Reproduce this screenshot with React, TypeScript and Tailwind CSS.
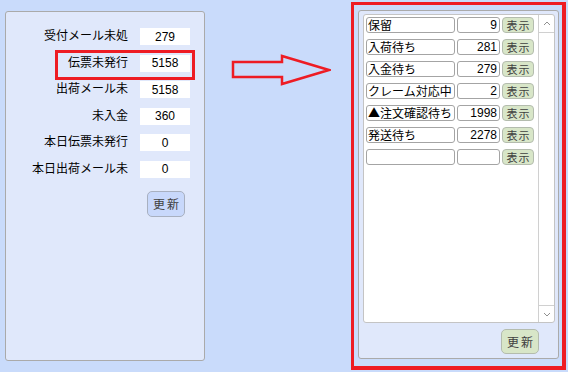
import React from "react";

const jp = { fontFamily: '"Noto Sans CJK JP", "Noto Sans", sans-serif' };
const num = { fontFamily: '"Liberation Sans", Arial, sans-serif' };

const summary = [
  { label: "受付メール未処", value: "279" },
  { label: "伝票未発行", value: "5158", marked: true },
  { label: "出荷メール未", value: "5158" },
  { label: "未入金", value: "360" },
  { label: "本日伝票未発行", value: "0" },
  { label: "本日出荷メール未", value: "0" },
];

const statuses = [
  { name: "保留", count: "9" },
  { name: "入荷待ち", count: "281" },
  { name: "入金待ち", count: "279" },
  { name: "クレーム対応中", count: "2" },
  { name: "▲注文確認待ち", count: "1998" },
  { name: "発送待ち", count: "2278" },
  { name: "", count: "" },
];

const SummaryRow = ({ label, value, marked }: { label: string; value: string; marked?: boolean }) => (
  <div className="relative flex h-[17px] items-start">
    <div className="flex-1 pr-[12px] text-right text-[12px] leading-[14px] text-black" style={jp}>
      {label}
    </div>
    <div className="flex h-[17px] w-[50px] items-center justify-center bg-white text-[12px] text-black" style={num}>
      {value}
    </div>
    {marked && (
      <span className="pointer-events-none absolute left-[49px] right-[-5px] top-[-5px] bottom-[-8px] border-[3px] border-[#ee1c24]" />
    )}
  </div>
);

const StatusRow = ({ name, count }: { name: string; count: string }) => (
  <div className="flex h-[16px] items-center gap-[2px]">
    <div
      className="flex h-[16px] w-[89px] items-center overflow-hidden whitespace-nowrap rounded-[3px] border border-[#a4a4a4] bg-white pl-[1px] text-[12px] text-black"
      style={jp}
    >
      {name}
    </div>
    <div
      className="flex h-[16px] w-[43px] items-center justify-end rounded-[3px] border border-[#a4a4a4] bg-white pr-[2px] text-[12px] text-black"
      style={num}
    >
      {count}
    </div>
    <button
      className="flex h-[16px] w-[32px] items-center justify-center rounded-[4px] border border-[#b4bcae] bg-[#d8e6c8] pl-[1px] text-[11px] tracking-[1px] text-[#404040]"
      style={jp}
    >
      表示
    </button>
  </div>
);

const Arrow = () => (
  <svg width="100" height="32" viewBox="0 0 100 32" className="mt-[54px] ml-[26px]">
    <polygon
      points="2,8 51,8 51,2 98,16 51,30 51,23 2,23"
      fill="none"
      stroke="#ee1c24"
      strokeWidth="2.5"
    />
  </svg>
);

export default function App() {
  return (
    <div className="flex h-[372px] w-[568px] overflow-hidden bg-[#c9dbfb]">
      <div className="ml-[5px] mt-[11px] flex h-[350px] w-[200px] flex-col rounded-[3px] border border-[#aaaaaa] bg-[#e0e8fb] pl-0 pr-[14px] pt-[16px]">
        <div className="flex flex-col gap-[9.6px]">
          {summary.map((s) => (
            <SummaryRow key={s.label} {...s} />
          ))}
        </div>
        <div className="mr-[5px] mt-[13px] flex justify-end">
          <button
            className="flex h-[26px] w-[38px] items-center justify-center rounded-[5px] border border-[#a8b0c0] bg-[#c8d8fb] pl-[2px] text-[12px] tracking-[2px] text-[#404040]"
            style={jp}
          >
            更新
          </button>
        </div>
      </div>

      <div className="w-[146px] shrink-0">
        <Arrow />
      </div>

      <div className="mt-[2px] h-[368px] w-[215px] shrink-0 border-[3px] border-r-[4px] border-b-[4px] border-[#ee1c24] pl-[4px] pt-[5px]">
        <div className="flex h-[349px] w-[201px] flex-col rounded-[3px] border border-[#aaaaaa] bg-[#e0e8fb] pl-[4px] pr-[3px] pt-[3px]">
          <div className="flex h-[309px] rounded-[3px] border border-[#c4c4c4] bg-white">
            <div className="flex flex-1 flex-col gap-[6px] pl-[2px] pt-[2px]">
              {statuses.map((s, i) => (
                <StatusRow key={i} {...s} />
              ))}
            </div>
            <div className="flex w-[16px] flex-col justify-between border-l border-[#d0d0d0]">
              <div className="flex h-[18px] items-center justify-center border-b border-[#d0d0d0]">
                <svg width="8" height="5" viewBox="0 0 8 5">
                  <polyline points="1,4 4,1 7,4" fill="none" stroke="#909090" strokeWidth="1" />
                </svg>
              </div>
              <div className="flex h-[17px] items-center justify-center border-t border-[#d0d0d0]">
                <svg width="8" height="5" viewBox="0 0 8 5">
                  <polyline points="1,1 4,4 7,1" fill="none" stroke="#909090" strokeWidth="1" />
                </svg>
              </div>
            </div>
          </div>
          <div className="mr-[16px] mt-[6px] flex justify-end">
            <button
              className="flex h-[25px] w-[38px] items-center justify-center rounded-[5px] border border-[#b4bcae] bg-[#d8e6c8] pl-[2px] text-[12px] tracking-[2px] text-[#404040]"
              style={jp}
            >
              更新
            </button>
          </div>
        </div>
      </div>
    </div>
  );
}
